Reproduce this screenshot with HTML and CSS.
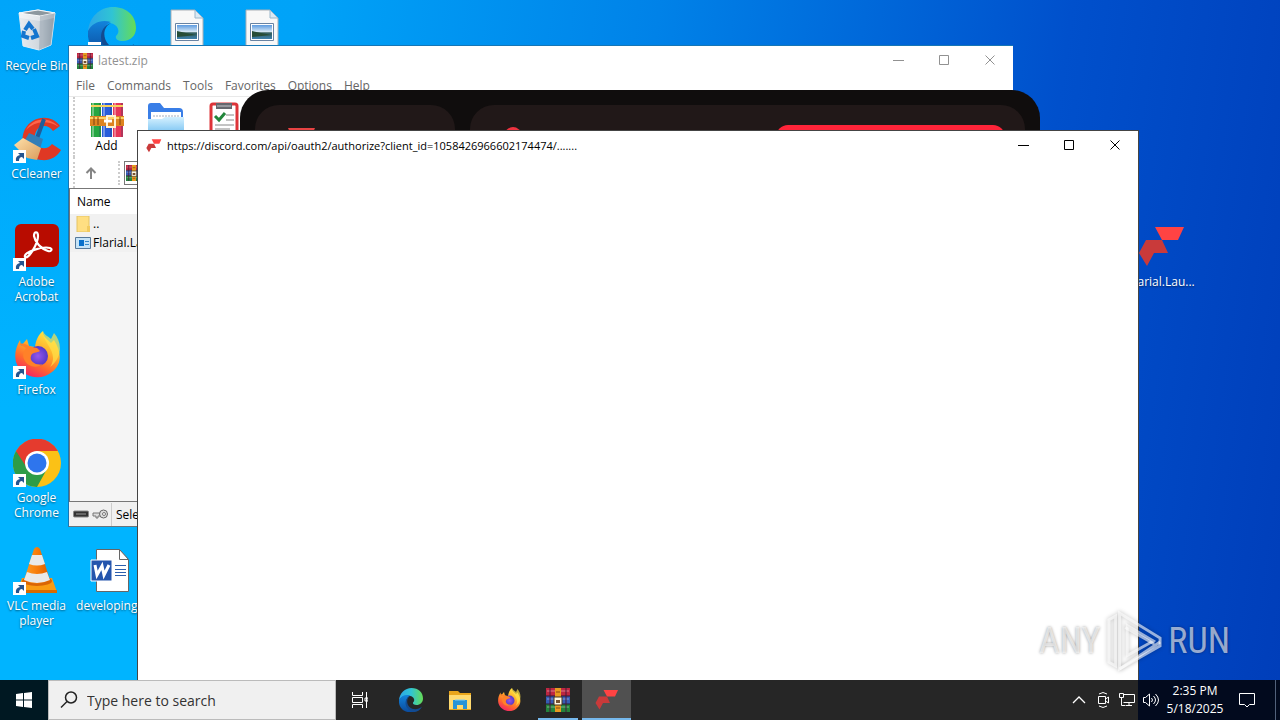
FILE: index.html
```html
<!DOCTYPE html>
<html lang="en">
<head>
<meta charset="utf-8">
<title>Desktop</title>
<link rel="stylesheet" href="styles.css">
</head>
<body>
<svg class="defs" aria-hidden="true">
  <defs>
    <linearGradient id="edge-a" x1="0" y1="0" x2="1" y2="0"><stop offset="0" stop-color="#2ca6e8"/><stop offset=".5" stop-color="#30c4d4"/><stop offset="1" stop-color="#66dc55"/></linearGradient>
    <linearGradient id="edge-b" x1="0" y1="0" x2="0" y2="1"><stop offset="0" stop-color="#1283dc"/><stop offset="1" stop-color="#0b4a9b"/></linearGradient>
    <linearGradient id="fox-a" x1=".8" y1="0" x2=".3" y2="1"><stop offset="0" stop-color="#fff04a"/><stop offset=".4" stop-color="#ffb12b"/><stop offset=".7" stop-color="#ff6a2c"/><stop offset="1" stop-color="#f32168"/></linearGradient>
    <radialGradient id="fox-b"><stop offset="0" stop-color="#9657ea"/><stop offset="1" stop-color="#5438c8"/></radialGradient>
    <linearGradient id="cone" x1="0" x2="1"><stop offset="0" stop-color="#ff9d25"/><stop offset=".5" stop-color="#f77d0b"/><stop offset="1" stop-color="#d95b00"/></linearGradient>
    <linearGradient id="bin" x1="0" x2="1"><stop offset="0" stop-color="#e8edf1"/><stop offset=".65" stop-color="#ccd4db"/><stop offset="1" stop-color="#9da9b3"/></linearGradient>
    <linearGradient id="folder" x1="0" y1="0" x2="0" y2="1"><stop offset="0" stop-color="#d5f1ff"/><stop offset="1" stop-color="#65b8ef"/></linearGradient>
    <linearGradient id="photo" x1="0" y1="0" x2="0" y2="1"><stop offset="0" stop-color="#5d9be0"/><stop offset=".5" stop-color="#dbeaf5"/><stop offset=".55" stop-color="#345d5b"/><stop offset="1" stop-color="#3d80ad"/></linearGradient>
    <linearGradient id="broom" x1="0" y1="0" x2="1" y2="1"><stop offset="0" stop-color="#ffe1aa"/><stop offset="1" stop-color="#d99c5c"/></linearGradient>
    <symbol id="i-bin" viewBox="0 0 48 48">
      <path d="m6 6 19-3 17 3-4 32-12 5-16-4z" fill="url(#bin)" stroke="#e3edf4"/>
      <path d="m6 6 19-3 17 3-15 3z" fill="#8d989f" stroke="#f5f8fa"/>
      <path d="M6 6 27 9l15-3-1 5-14 3L7 11z" fill="#fff" opacity=".4"/>
      <path d="m27 9 15-3-4 32-12 5z" fill="#788895" opacity=".35"/>
      <g fill="none" stroke="#1476cf" stroke-width="4"><path d="m12 23 4-6 4 5"/><path d="m21 22 3 7-6 2"/><path d="m16 31-6-2 1-5"/></g>
    </symbol>
    <symbol id="i-edge" viewBox="0 0 48 48">
      <path d="M0 25C1 10 12 0 25 0c14 0 23 9 23 21 0 8-6 13-13 13-5 0-8-2-7-5 5-4 2-12-6-13C12 14 4 18 0 25z" fill="url(#edge-a)"/>
      <path d="M0 24c4-8 13-12 23-9-6 2-9 8-8 15 2 9 10 16 20 16C17 54-2 43 0 24z" fill="url(#edge-b)"/>
      <path d="M23 16c-8 4-9 15-2 22 7 6 17 6 25-1-5 12-18 14-27 6-9-8-8-23 4-27z" fill="#134b91"/>
    </symbol>
    <symbol id="i-photo" viewBox="0 0 48 48">
      <path d="M8 3h24l8 8v36H8z" fill="#f8f8f8" stroke="#a9afb5"/>
      <path d="M32 3v8h8z" fill="#dae9f4" stroke="#9ab6ca"/>
      <path d="M12.500 16.500h23v17h-23z" fill="#fff" stroke="#6883a3"/><path d="M14 18h20v14H14z" fill="url(#photo)"/>
      <path d="m14 24 9 2 11 2-20 2z" fill="#274d37"/>
    </symbol>
    <symbol id="i-cc" viewBox="0 0 48 48">
      <path d="M47 11C39-1 20 0 12 14 5 29 13 43 28 45c9 1 16-3 20-10l-9-6c-5 7-16 5-17-4-2-13 11-19 18-9z" fill="#df3824"/>
      <path d="M46 12C36 1 20 2 13 15c8-8 20-11 33-3z" fill="#ff654a"/>
      <path d="M31 4 23 26" stroke="#215d99" stroke-width="4"/><path d="m16 18 14 6-3 10-15-9z" fill="#337eb7"/>
      <path d="M10 23 1 30l13 13 10 2 4-12z" fill="url(#broom)"/>
    </symbol>
    <symbol id="i-acro" viewBox="0 0 48 48">
      <rect x="2" y="1" width="44" height="43" rx="6" fill="#b80c00"/>
      <path d="M12 34c-2-5 18-11 25-9 3 1 1 4-2 3-7-2-13-9-14-15 0-5 4-5 4 0 0 8-10 24-13 21z" fill="none" stroke="#fff" stroke-width="2.2" stroke-linejoin="round"/>
    </symbol>
    <symbol id="i-fox" viewBox="0 0 48 48">
      <path d="M30 0c0 6 4 8 8 12l3-3c8 13 8 24-2 32-12 10-31 5-36-10-2-8 0-15 4-22l1 6 6-7 2 7 6 1c1-7 3-12 8-16z" fill="url(#fox-a)"/>
      <path d="M30 0c-1 12 17 21 7 36 13-10 12-25 4-34l-3 6C35 5 31 4 30 0z" fill="#ffe348" opacity=".7"/>
      <circle cx="25" cy="25" r="10" fill="url(#fox-b)"/>
      <path d="M6 13c6-2 9 3 18 4l3 3c-3 2-8 1-9 5-2 6 6 10 12 8-6 5-16 3-19-5-2-5 0-8 2-11z" fill="#ff8128"/>
    </symbol>
    <symbol id="i-chrome" viewBox="0 0 48 48">
      <circle cx="24" cy="24" r="24" fill="#fbc116"/>
      <path d="M3 12A24 24 0 0 0 24 48l10-18-10-6z" fill="#2d9c48"/>
      <path d="M3 12a24 24 0 0 1 42 0H24l-10 17z" fill="#e53b2e"/>
      <circle cx="24" cy="24" r="12" fill="#fff"/><circle cx="24" cy="24" r="9.5" fill="#2e75ed"/>
    </symbol>
    <symbol id="i-vlc" viewBox="0 0 48 48">
      <path d="m9 31-5 14h40l-5-14z" fill="#f99b13"/><path d="M4 43h40v3H4z" fill="#d76a00"/>
      <ellipse cx="24" cy="34" rx="15" ry="5" fill="#d96506"/>
      <path d="M21 2q3-4 6 0l10 31q-13 7-26 0z" fill="url(#cone)"/>
      <path d="M19 8h10l3 9q-8 3-16 0zM14 25q10 4 20 0l3 8q-13 6-26 0z" fill="#e9e9e9"/>
    </symbol>
    <symbol id="i-word" viewBox="0 0 48 48">
      <path d="M8.500 2.500h23l9 10v32h-32z" fill="#fff" stroke="#666"/><path d="M31.500 2.500v10h9z" fill="#fff" stroke="#666"/>
      <path d="M27 18.500h11m-11 4h11m-11 3h11m-11 3h11" stroke="#2c5ead"/>
      <path d="M3 13h21v21H3z" fill="#2455ad" stroke="#fff"/>
      <path d="m7 18 2 10 5-9 2 9 5-10" fill="none" stroke="#fff" stroke-width="3"/>
    </symbol>
    <symbol id="i-flarial" viewBox="0 0 48 48">
      <path d="M17 4h29l-6 13H24z" fill="#ff4343"/><path d="M8 17h16l6 13H16L9 43 1 30z" fill="#c93a3a"/>
    </symbol>
    <symbol id="i-rar" viewBox="0 0 24 24">
      <path d="M0 0h24v8H0z" fill="#bd2741"/><path d="M0 8h24v8H0z" fill="#365cb5"/><path d="M0 16h24v8H0z" fill="#23823b"/>
      <path d="M1 3h22M1 11h22M1 19h22" stroke="#fff" opacity=".4"/><path d="M0 8h24M0 16h24" stroke="#2b1830"/><path d="M4 0v24M20 0v24" stroke="#49173b"/>
      <path d="M9 0h6v24H9z" fill="#e89a21"/><path d="M8 9h8v8H8z" fill="#fff7e0" stroke="#443321"/><path d="M10 12h4v3h-4z" fill="#745130"/><path d="M10 4h4M10 20h4" stroke="#864515"/>
    </symbol>
    <symbol id="i-books" viewBox="0 0 36 36">
      <path d="M2 1h10v34H2z" fill="#26a642"/><path d="M13 1h10v34H13z" fill="#285dda"/><path d="M24 1h10v34H24z" fill="#e63658"/>
      <path d="M4 1v34M15 1v34M26 1v34" stroke="#fff" stroke-width="2" opacity=".35"/><path d="M11 1v34M22 1v34M33 1v34" stroke="#193461" opacity=".5"/>
      <path d="M2 4h32" stroke="#f6d15c" stroke-width="2"/><path d="M1 14h34v10H1z" fill="#dd8420"/><path d="M1 16h34" stroke="#ffd466" stroke-width="2"/>
      <path d="M18 14h8v11h-8z" fill="none" stroke="#fff2d1" stroke-width="2"/><path d="M15 19h8" stroke="#fff" stroke-width="3"/><path d="M5 15v8m4-8v8m22-8v8" stroke="#7d410f"/>
    </symbol>
    <symbol id="i-extract" viewBox="0 0 36 36">
      <path d="M0 4q0-3 3-3h9l4 5h15q4 0 4 4v24H0z" fill="#397ee7"/><path d="M3 10h30v15H3z" fill="#fff"/><path d="M5 14h26" stroke="#a5aebd" stroke-dasharray="2 1"/>
      <path d="M0 17h14l3-2h19v20H0z" fill="url(#folder)"/>
    </symbol>
    <symbol id="i-test" viewBox="0 0 36 36">
      <rect x="4" y="2" width="26" height="33" rx="2" fill="#fff" stroke="#dd3439" stroke-width="3"/>
      <path d="M9 1h16v6H9z" fill="#64676e"/><path d="M10 4h14" stroke="#c5c9ce"/><path d="m8 14 4 4 6-7" fill="none" stroke="#22863b" stroke-width="3"/><path d="M19 13h8m-8 5h8M8 23h19M8 27h15" stroke="#888"/>
    </symbol>
    <symbol id="i-link" viewBox="0 0 13 13"><path d="M0 0h13v13H0z" fill="#fff"/><path d="M3 11q-1-5 4-6L5 3h6v6L9 7q-3 0-3 4z" fill="#25558f"/></symbol>
    <symbol id="i-min" viewBox="0 0 11 11"><path d="M0 5.500h11" stroke="currentColor"/></symbol>
    <symbol id="i-max" viewBox="0 0 11 11"><path d="M.5.5h9v9h-9z" fill="none" stroke="currentColor"/></symbol>
    <symbol id="i-close" viewBox="0 0 11 11"><path d="m.5.5 9 9m0-9-9 9" stroke="currentColor" fill="none"/></symbol>
    <symbol id="i-explorer" viewBox="0 0 24 24">
      <path d="M1 3h9l2 2h11v17H1z" fill="#e9a51b"/><path d="M1 7h22v14H1z" fill="#ffda70"/><path d="M5 21v-9h14v9h-4v-4H9v4z" fill="#2794d8"/><path d="M7 12h10" stroke="#80cdf4"/>
    </symbol>
  </defs>
</svg>

<main class="desktop">
  <div class="shortcuts">
    <a class="shortcut wide c1 r1" href="#"><span class="pic"><svg><use href="#i-bin"/></svg></span>Recycle Bin</a>
    <a class="shortcut c2 r1" href="#" aria-label="Edge"><span class="pic"><svg><use href="#i-edge"/></svg><svg class="link"><use href="#i-link"/></svg></span></a>
    <a class="shortcut c3 r1" href="#" aria-label="Picture"><span class="pic"><svg><use href="#i-photo"/></svg></span></a>
    <a class="shortcut c4 r1" href="#" aria-label="Picture"><span class="pic"><svg><use href="#i-photo"/></svg></span></a>
    <a class="shortcut c1 r2" href="#"><span class="pic"><svg><use href="#i-cc"/></svg><svg class="link"><use href="#i-link"/></svg></span>CCleaner</a>
    <a class="shortcut c1 r3" href="#"><span class="pic"><svg><use href="#i-acro"/></svg><svg class="link"><use href="#i-link"/></svg></span>Adobe Acrobat</a>
    <a class="shortcut c1 r4" href="#"><span class="pic"><svg><use href="#i-fox"/></svg><svg class="link"><use href="#i-link"/></svg></span>Firefox</a>
    <a class="shortcut c1 r5" href="#"><span class="pic"><svg><use href="#i-chrome"/></svg><svg class="link"><use href="#i-link"/></svg></span>Google Chrome</a>
    <a class="shortcut wide c1 r6" href="#"><span class="pic"><svg><use href="#i-vlc"/></svg><svg class="link"><use href="#i-link"/></svg></span>VLC media player</a>
    <a class="shortcut wide c2 r6" href="#"><span class="pic"><svg><use href="#i-word"/></svg></span>developing...</a>
    <a class="shortcut wide c16 r3" href="#"><span class="pic"><svg><use href="#i-flarial"/></svg></span>Flarial.Lau...</a>
  </div>

  <section class="window archive">
    <header class="titlebar">
      <svg class="app-icon"><use href="#i-rar"/></svg><span class="title">latest.zip</span>
      <button class="control" aria-label="Minimize"><svg><use href="#i-min"/></svg></button>
      <button class="control" aria-label="Maximize"><svg><use href="#i-max"/></svg></button>
      <button class="control" aria-label="Close"><svg><use href="#i-close"/></svg></button>
    </header>
    <nav class="menu"><button>File</button><button>Commands</button><button>Tools</button><button>Favorites</button><button>Options</button><button>Help</button></nav>
    <div class="tools">
      <button><svg><use href="#i-books"/></svg>Add</button>
      <button aria-label="Extract"><svg><use href="#i-extract"/></svg></button>
      <button aria-label="Test"><svg><use href="#i-test"/></svg></button>
    </div>
    <div class="address">
      <button class="up" aria-label="Up"><svg viewBox="0 0 12 12"><path d="M6 12V2M1.500 6 6 1.500 10.500 6" fill="none" stroke="#858585" stroke-width="2"/></svg></button>
      <div class="path"><svg><use href="#i-rar"/></svg></div>
    </div>
    <div class="files">
      <table>
        <thead><tr><th>Name</th></tr></thead>
        <tbody>
          <tr><td><span class="cell"><svg viewBox="0 0 16 16"><path d="M2 0h12v16H2z" fill="#ffdf82" stroke="#e5c464"/><path d="M12 10h3v6h-3z" fill="#f2cb60"/></svg>..</span></td></tr>
          <tr><td><span class="cell"><svg viewBox="0 0 16 16"><path d="M.5 2.500h15v11H.5z" fill="#c5e3f7" stroke="#55799b"/><path d="M4 5h5v6H4z" fill="#0870cb"/><path d="M10 6.500h4m-4 3h4" stroke="#368acb"/></svg>Flarial.La</span></td></tr>
        </tbody>
      </table>
    </div>
    <footer class="status">
      <svg viewBox="0 0 16 12"><rect x=".5" y="3" width="15" height="6" rx="1" fill="#333" stroke="#888"/><path d="M3 6h10" stroke="#999"/></svg>
      <svg viewBox="0 0 16 12"><path d="M9 5H1v3h3v2h2V8h3" fill="#ddd" stroke="#777"/><circle cx="11.500" cy="6" r="4" fill="#ddd" stroke="#666"/><circle cx="12" cy="6" r="1.500" fill="#fff" stroke="#777"/></svg>
      <span>Selec</span>
    </footer>
  </section>

  <section class="launcher" aria-label="Launcher">
    <div class="side"><i></i></div>
    <div class="content"><i class="dot"></i><i class="bar"></i></div>
  </section>

  <section class="window browser">
    <header class="titlebar">
      <svg class="app-icon"><use href="#i-flarial"/></svg><span class="title">https://discord.com/api/oauth2/authorize?client_id=1058426966602174474/.......</span>
      <button class="control" aria-label="Minimize"><svg><use href="#i-min"/></svg></button>
      <button class="control" aria-label="Maximize"><svg><use href="#i-max"/></svg></button>
      <button class="control" aria-label="Close"><svg><use href="#i-close"/></svg></button>
    </header>
  </section>

  <div class="watermark">
    <span>ANY</span>
    <svg viewBox="0 0 58 64"><path d="M3 10v44l7 4V6zM14 3v58l42-24v-8zM22 16v31l27-15z" fill="none" stroke="currentColor" stroke-width="3"/><path d="m14 61 42-28M20 18l30 17" stroke="currentColor" stroke-width="3"/></svg>
    <span>RUN</span>
  </div>
</main>

<footer class="taskbar">
  <button class="task start" aria-label="Start"><svg viewBox="0 0 16 16"><path d="m0 2 7-1v6.500H0zM8 1l8-1v7.500H8zM0 8.500h7V15l-7-1zM8 8.500h8V16l-8-1z" fill="#fff"/></svg></button>
  <label class="search"><svg viewBox="0 0 18 18"><circle cx="11" cy="6.500" r="5.500" fill="none" stroke="#222" stroke-width="1.500"/><path d="m7 10.500-6 6" stroke="#222" stroke-width="1.500"/></svg><input type="text" placeholder="Type here to search" aria-label="Search"></label>
  <button class="task view" aria-label="Task view"><svg viewBox="0 0 16 16"><path d="M.5 0v3.500h10V0M.5 5.500h10v5H.5zM.5 16v-3.500h10V16M14.500 0v16M13 6h3v3h-3z" fill="none" stroke="#fff"/></svg></button>
  <button class="task" aria-label="Edge"><svg><use href="#i-edge"/></svg></button>
  <button class="task" aria-label="File Explorer"><svg><use href="#i-explorer"/></svg></button>
  <button class="task" aria-label="Firefox"><svg><use href="#i-fox"/></svg></button>
  <button class="task open" aria-label="WinRAR"><svg><use href="#i-rar"/></svg></button>
  <button class="task open active" aria-label="Flarial"><svg><use href="#i-flarial"/></svg></button>
  <div class="tray">
    <button aria-label="Show hidden icons"><svg viewBox="0 0 16 16"><path d="m2 11 6-6 6 6" fill="none" stroke="#fff" stroke-width="1.300"/></svg></button>
    <button aria-label="Meet now"><svg viewBox="0 0 16 16"><path d="M3.500 4.500h7v7h-7zM10.500 7l3-2v6l-3-2M4 2q4-3 8 0M4 14q4 3 8 0" fill="none" stroke="#fff"/></svg></button>
    <button aria-label="Network"><svg viewBox="0 0 16 16"><path d="M4.500 2.500h11v8h-11M.5 1.500h4v4h-4zM2.500 5.500v8h4M10 10.500v3M7 13.500h6" fill="none" stroke="#fff"/></svg></button>
    <button aria-label="Volume"><svg viewBox="0 0 16 16"><path d="M.5 5.500h2l4-3.500v12l-4-3.500h-2zM8.500 6q2 2 0 4M10.500 4q4 4 0 8M12.500 2q6 6 0 12" fill="none" stroke="#fff"/></svg></button>
    <div class="clock"><span>2:35 PM</span><span>5/18/2025</span></div>
    <button class="notes" aria-label="Notifications"><svg viewBox="0 0 16 16"><path d="M.5 1.500h15v11h-5L8 15l-2.500-2.500h-5z" fill="none" stroke="#fff"/></svg></button>
  </div>
</footer>
</body>
</html>
```
FILE: styles.css
```css
* { box-sizing: border-box; }
body {
  margin: 0;
  height: 100vh;
  display: flex;
  flex-direction: column;
  overflow: hidden;
  font: 12px/15px "Open Sans", "Noto Sans", sans-serif;
  color: #000;
}
button { border: 0; padding: 0; background: none; font: inherit; color: inherit; }
svg { display: block; }
.defs { position: absolute; width: 0; height: 0; }

.desktop {
  position: relative;
  flex: 1;
  overflow: hidden;
  background: linear-gradient(98deg, #00a5fa 0, #00a3f8 22%, #0082e8 48%, #0050cc 78%, #003eba 100%);
}
.desktop::before {
  content: "";
  position: absolute;
  inset: 0;
  background: linear-gradient(0deg, #00b4ff 40%, transparent);
  width: 138px;
}
.shortcuts {
  position: absolute;
  top: 0;
  left: -1px;
  display: grid;
  grid-template-columns: repeat(16, 75px);
  grid-template-rows: repeat(6, 108px);
  padding-top: 7px;
}
.shortcut {
  display: flex;
  flex-direction: column;
  align-items: center;
  padding: 0 8px;
  gap: 3px;
  text-align: center;
  text-decoration: none;
  color: #fff;
  text-shadow: 0 1px 2px #0008;
}
.wide { padding: 0; }
.c1 { grid-column: 1; } .c2 { grid-column: 2; } .c3 { grid-column: 3; } .c4 { grid-column: 4; } .c16 { grid-column: 16; }
.r1 { grid-row: 1; } .r2 { grid-row: 2; } .r3 { grid-row: 3; } .r4 { grid-row: 4; } .r5 { grid-row: 5; } .r6 { grid-row: 6; }
.pic { position: relative; width: 48px; height: 48px; }
.pic svg { width: 48px; height: 48px; }
.pic .link { position: absolute; left: 0; bottom: 0; width: 13px; height: 13px; }

.window { position: absolute; display: flex; flex-direction: column; background: #fff; }
.titlebar { display: flex; align-items: center; height: 29px; padding-left: 8px; flex: none; }
.app-icon { width: 16px; height: 16px; margin-right: 5px; }
.title { flex: 1; white-space: nowrap; }
.control { width: 46px; height: 29px; display: grid; place-items: center; }
.control svg { width: 11px; height: 11px; }

.archive { left: 68px; top: 45px; width: 945px; height: 482px; border: 1px solid #1676b5; border-right: 0; border-bottom-color: #69747b; color: #666; }
.archive .titlebar { color: #919191; }
.menu { display: flex; gap: 12px; padding: 3px 7px; border-bottom: 1px solid #e9e9e9; }
.tools { display: flex; height: 60px; margin-left: 4px; border-left: 2px dotted #ccc; color: #000; padding-top: 5px; }
.tools button { width: 59px; display: flex; flex-direction: column; align-items: center; }
.tools svg { width: 36px; height: 36px; }
.tools button:first-child { margin-left: 2px; }
.address { display: flex; height: 31px; margin-left: 4px; border-left: 2px dotted #ccc; align-items: center; }
.up { width: 45px; height: 24px; padding-left: 10px; border-right: 2px dotted #ccc; }
.up svg { width: 12px; height: 12px; }
.path { flex: 1; border: 1px solid #777; height: 24px; margin-left: 4px; padding: 3px 1px; }
.path svg { width: 16px; height: 16px; }
.files { flex: 1; border: 1px solid #777; background: #f5f5f5; color: #000; }
.files table { width: 100%; border-spacing: 0; }
.files th { height: 25px; padding: 0 7px; text-align: left; font-weight: 400; background: #fff; }
.files td { height: 19px; padding: 0 5px; background: #f1f1f1; }
.cell { display: flex; gap: 2px; align-items: center; }
.cell svg { width: 16px; height: 16px; }
.status { height: 24px; display: flex; align-items: center; gap: 3px; padding: 0 4px; background: #f0f0f0; color: #000; }
.status svg { width: 16px; height: 12px; }
.status span { border-left: 1px solid #ccc; padding: 4px; }

.launcher { position: absolute; left: 240px; top: 90px; width: 800px; height: 500px; display: flex; gap: 15px; padding: 15px; border-radius: 28px; background: #100d0d; }
.side, .content { border-radius: 24px; background: #211818; display: flex; align-items: flex-start; padding-top: 20px; }
.side { width: 200px; padding-left: 33px; padding-top: 23px; }
.side i { width: 27px; height: 12px; background: #e84343; clip-path: polygon(0 0, 100% 0, 80% 100%, 20% 100%); }
.content { flex: 1; justify-content: space-between; padding-left: 35px; padding-right: 20px; }
.dot { width: 16px; height: 16px; margin-top: 2px; border-radius: 50%; background: #ef3340; }
.bar { width: 229px; height: 40px; border-radius: 12px; background: #ff2439; }

.browser { left: 137px; top: 130px; right: 141px; bottom: 0; border: 1px solid #444; border-bottom: 0; }
.browser .title { font-size: 11px; }

.watermark { position: absolute; right: 50px; bottom: 8px; display: flex; align-items: center; gap: 6px; color: #ffffff99; font: 36px/40px "Liberation Sans Narrow", "Roboto Condensed", Roboto, sans-serif; text-shadow: 0 0 3px #0006; }
.watermark svg { width: 56px; height: 62px; filter: drop-shadow(0 0 2px #0006); }

.taskbar {
  flex: none;
  height: 40px;
  display: flex;
  align-items: stretch;
  background: linear-gradient(90deg, #001822 138px, #262626 138px, #262626 calc(100% - 142px), #020a1e calc(100% - 142px));
  color: #fff;
}
.task { width: 49px; display: grid; place-items: center; flex: none; }
.task svg { width: 24px; height: 24px; }
.task.start { width: 48px; }
.task.view { width: 48px; margin-right: 2px; }
.start svg, .view svg { width: 16px; height: 16px; }
.search { width: 288px; display: flex; align-items: center; gap: 9px; padding-left: 11px; background: #f0f0f0; border: 1px solid #bbb; }
.search svg { width: 18px; height: 18px; }
.search input { flex: 1; min-width: 0; border: 0; outline: 0; padding: 2px 0 0; background: none; font: 14px/20px "Open Sans", "Noto Sans", sans-serif; }
.search input::placeholder { color: #333; opacity: 1; }
.open { background: linear-gradient(#76b9ed, #76b9ed) center bottom / 40px 2px no-repeat; }
.active { background: linear-gradient(#76b9ed, #76b9ed) center bottom / 100% 2px no-repeat #505050; }
.tray { margin-left: auto; display: flex; align-items: center; }
.tray button { width: 24px; height: 40px; display: grid; place-items: center; }
.tray svg { width: 16px; height: 16px; }
.clock { width: 64px; display: flex; flex-direction: column; align-items: center; line-height: 18px; }
.tray .notes { width: 49px; padding-right: 8px; border-right: 1px solid #52617b; margin-right: 4px; }
```
